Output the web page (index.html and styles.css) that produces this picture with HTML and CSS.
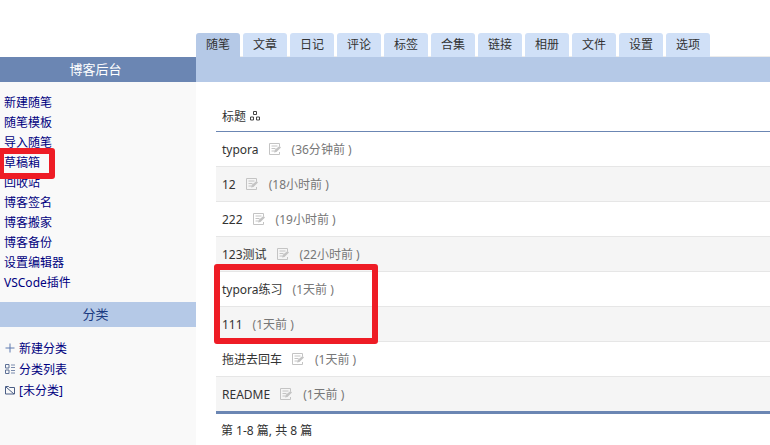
FILE: index.html
```html
<!DOCTYPE html>
<html lang="zh">
<head>
<meta charset="utf-8">
<title>博客后台</title>
<link rel="stylesheet" href="styles.css">
</head>
<body>
<svg class="defs" width="0" height="0" aria-hidden="true">
  <symbol id="edit" viewBox="0 0 12 12">
    <path d="M10.500 3.500V.5H.5v11h10V9M2.500 3h6M2.500 5.500h4M2.500 8h2.500" fill="none" stroke="#c4c4c4" stroke-width="1"/>
    <path d="M5 9.500l.5-2.500 5-4 1.500 1.500-4.500 4.500z" fill="#c4c4c4"/>
  </symbol>
</svg>
<div class="page">
  <div class="top">
    <div class="brand-space"></div>
    <nav class="tabs">
      <a class="tab active">随笔</a><a class="tab">文章</a><a class="tab">日记</a><a class="tab">评论</a><a class="tab">标签</a><a class="tab">合集</a><a class="tab">链接</a><a class="tab">相册</a><a class="tab">文件</a><a class="tab">设置</a><a class="tab">选项</a>
    </nav>
  </div>
  <div class="bars">
    <div class="bar-title">博客后台</div>
    <div class="bar-fill"></div>
  </div>
  <div class="body">
    <aside class="side">
      <ul class="links">
        <li>新建随笔</li><li>随笔模板</li><li>导入随笔</li><li>草稿箱</li><li>回收站</li><li>博客签名</li><li>博客搬家</li><li>博客备份</li><li>设置编辑器</li><li>VSCode插件</li>
      </ul>
      <div class="side-head">分类</div>
      <ul class="cats">
        <li><svg class="cat-icon" viewBox="0 0 10 10"><path d="M5 .5v9M.5 5h9" stroke="#5f7bb0" fill="none"/></svg>新建分类</li>
        <li><svg class="cat-icon" viewBox="0 0 10 10"><path d="M.5 .5h3.500v3.500h-3.500zM.5 6h3.500v3.500h-3.500z" stroke="#5d7096" fill="none"/><path d="M6 1h4M6 3.500h4M6 6.500h4M6 9h4" stroke="#7a8bad"/></svg>分类列表</li>
        <li><svg class="cat-icon" viewBox="0 0 10 10"><path d="M.5 1.500h3l1 1h5v6.500h-9zM1 2l8 7" stroke="#4a5d85" fill="none"/></svg>[未分类]</li>
      </ul>
    </aside>
    <main class="main">
      <div class="list-head">标题<svg class="sort" viewBox="0 0 10 10"><path d="M3.500 .5h3v3h-3zM.5 6h3v3h-3zM6.500 6h3v3h-3z" fill="none" stroke="#444"/></svg></div>
      <div class="row"><span class="name">typora</span><svg class="edit"><use href="#edit"/></svg><span class="time">(36分钟前 )</span></div>
      <div class="row alt"><span class="name">12</span><svg class="edit"><use href="#edit"/></svg><span class="time">(18小时前 )</span></div>
      <div class="row"><span class="name">222</span><svg class="edit"><use href="#edit"/></svg><span class="time">(19小时前 )</span></div>
      <div class="row alt"><span class="name">123测试</span><svg class="edit"><use href="#edit"/></svg><span class="time">(22小时前 )</span></div>
      <div class="row"><span class="name">typora练习</span><span class="time">(1天前 )</span></div>
      <div class="row alt"><span class="name">111</span><span class="time">(1天前 )</span></div>
      <div class="row"><span class="name">拖进去回车</span><svg class="edit"><use href="#edit"/></svg><span class="time">(1天前 )</span></div>
      <div class="row alt last"><span class="name">README</span><svg class="edit"><use href="#edit"/></svg><span class="time">(1天前 )</span></div>
      <div class="pager">第 1-8 篇, 共 8 篇</div>
    </main>
  </div>
</div>
<div class="mark mark-side"></div>
<div class="mark mark-rows"></div>
</body>
</html>
```

FILE: styles.css
```css
* { box-sizing: border-box; }
html, body { margin: 0; height: 445px; overflow: hidden; background: #fff; }
body {
  position: relative;
  font-family: "Noto Sans", "Noto Sans CJK SC", sans-serif;
  font-size: 12px;
  color: #333;
}
.defs { position: absolute; }
.top { display: flex; height: 57px; align-items: flex-end; }
.brand-space { width: 196px; flex: none; }
.tabs { flex: 1; display: flex; gap: 3px; box-shadow: inset 0 -1px #ececec; }
.tab {
  width: 44px; height: 24px; line-height: 24px; text-align: center;
  background: #d0e0f7; color: #333; border-radius: 3px 3px 0 0;
}
.tab.active { background: #b5c9e7; }
.bars { display: flex; height: 25px; }
.bar-title {
  width: 196px; flex: none; padding-right: 5px; background: #6b86b3; color: #fff;
  font-size: 13px; text-align: center; line-height: 25px;
}
.bar-fill { flex: 1; background: #b5c9e7; }
.body { display: flex; height: 363px; }
.side { width: 196px; flex: none; background: #f9f9f9; padding-top: 11px; color: #000080; }
.links { list-style: none; margin: 0; padding: 0 0 0 4px; }
.links li { height: 20px; line-height: 20px; }
.side-head {
  margin-top: 9px; height: 25px; padding-right: 5px; line-height: 25px; text-align: center;
  font-size: 13px; background: #b5c9e7; color: #1a3a80;
}
.cats { list-style: none; margin: 10px 0 0; padding: 0 0 0 5px; }
.cats li { display: flex; align-items: center; height: 21px; }
.cat-icon { width: 10px; height: 10px; margin-right: 4px; flex: none; }
.main { flex: 1; padding: 0 0 0 20px; }
.list-head {
  display: flex; align-items: center; gap: 4px;
  margin-top: 22px; height: 28px; padding: 0 0 3px 6px;
  border-bottom: 1px solid #6b86b3; color: #333;
}
.sort { width: 10px; height: 10px; }
.row {
  display: flex; align-items: center; height: 35px; padding-left: 6px;
  border-bottom: 1px solid #e6e6e6;
}
.row.alt { background: #f5f5f5; }
.row.last { border-bottom: 3px solid #6b86b3; height: 37px; }
.edit { width: 12px; height: 12px; margin-left: 10px; }
.time { margin-left: 10px; color: #777; }
.edit + .time { margin-left: 11px; }
.pager { padding: 7px 0 0 5px; line-height: 20px; }
.mark { position: absolute; border: 6px solid #ee1c25; border-radius: 3px; }
.mark-side { left: -2px; top: 148px; width: 57px; height: 31px; }
.mark-rows { left: 214px; top: 264px; width: 164px; height: 80px; }
```
